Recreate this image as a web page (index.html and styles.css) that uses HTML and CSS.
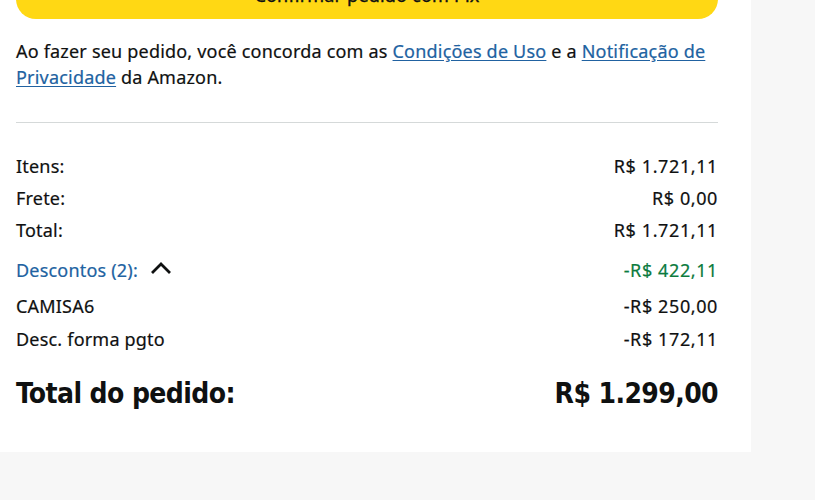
FILE: index.html
```html
<!DOCTYPE html>
<html lang="pt-BR">
<head>
<meta charset="utf-8">
<title>Resumo do pedido</title>
<link rel="stylesheet" href="styles.css">
</head>
<body>
<div class="panel">
  <button class="confirm">Confirmar pedido com Pix</button>
  <p class="legal">Ao fazer seu pedido, você concorda com as <a href="#">Condições de Uso</a> e a <a href="#">Notificação de Privacidade</a> da Amazon.</p>
  <hr class="divider">
  <div class="rows">
    <div class="row"><span>Itens:</span><span class="num">R$ 1.721,11</span></div>
    <div class="row"><span>Frete:</span><span class="num">R$ 0,00</span></div>
    <div class="row"><span>Total:</span><span class="num">R$ 1.721,11</span></div>
    <div class="row disc-head"><span class="disc-label">Descontos (2): <svg class="chev" width="22" height="14" viewBox="0 0 22 14"><polyline points="2,12 11,3 20,12" fill="none" stroke="#0f1111" stroke-width="2.8" stroke-linecap="butt" stroke-linejoin="miter"/></svg></span><span class="num green">-R$ 422,11</span></div>
    <div class="row disc1"><span>CAMISA6</span><span class="num">-R$ 250,00</span></div>
    <div class="row disc2"><span>Desc. forma pgto</span><span class="num">-R$ 172,11</span></div>
    <div class="row grand"><span>Total do pedido:</span><span>R$ 1.299,00</span></div>
  </div>
</div>
</body>
</html>
```
FILE: styles.css
```css
html, body {
  margin: 0;
  padding: 0;
  background: #f7f7f7;
  overflow: hidden;
}
body {
  font-family: "Noto Sans", "Open Sans", sans-serif;
  color: #0f1111;
  font-size: 18px;
  letter-spacing: 0.2px;
  -webkit-text-stroke: 0.2px currentColor;
}
.panel {
  width: 702px;
  background: #ffffff;
  padding: 0 33px 40px 16px;
}
.confirm {
  display: block;
  width: 100%;
  height: 49px;
  margin: -30px 0 0 0;
  border: none;
  border-radius: 20px;
  background: #ffd814;
  font-family: inherit;
  font-size: 18px;
  letter-spacing: 0.2px;
  -webkit-text-stroke: 0.4px #0f1111;
  color: #0f1111;
  padding: 0;
}
.legal {
  margin: 19px 0 0 0;
  line-height: 26px;
  font-size: 18px;
}
.legal a {
  color: #2162a1;
  text-decoration: underline;
  text-underline-offset: 2px;
}
.divider {
  margin: 32px 0 0 0;
  border: none;
  border-top: 1px solid #d5d9d9;
  height: 0;
}
.rows {
  display: flex;
  flex-direction: column;
  padding-top: 31px;
}
.row {
  display: flex;
  justify-content: space-between;
  align-items: center;
  line-height: 24px;
  height: 24px;
  margin-bottom: 8px;
}
.num {
  letter-spacing: 0.6px;
}
.disc-head {
  margin-top: 8px;
  margin-bottom: 12px;
}
.disc-label {
  color: #2162a1;
  display: flex;
  align-items: center;
  gap: 12px;
}
.chev {
  margin-top: -4px;
}
.green {
  color: #0b7b3e;
}
.disc1 {
  margin-bottom: 9px;
}
.disc2 {
  margin-bottom: 25px;
}
.grand {
  height: 36px;
  line-height: 36px;
  margin-bottom: 0;
  font-family: "DejaVu Sans Condensed", "DejaVu Sans", sans-serif;
  font-stretch: condensed;
  font-weight: bold;
  font-size: 28px;
  letter-spacing: -0.6px;
  -webkit-text-stroke: 0;
}
```
